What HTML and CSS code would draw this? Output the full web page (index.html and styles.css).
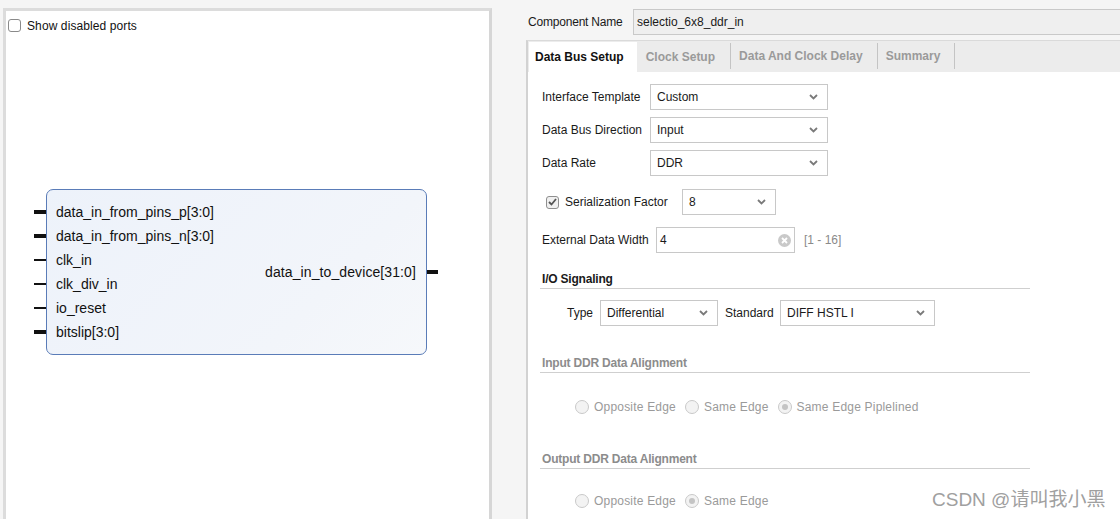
FILE: index.html
```html
<!DOCTYPE html>
<html>
<head>
<meta charset="utf-8">
<link rel="stylesheet" href="styles.css">
</head>
<body>
<div class="page">
  <section class="left-panel">
    <label class="show-ports"><span class="cb"></span>Show disabled ports</label>
    <div class="canvas">
      <div class="block">
        <div class="ports-in">
          <div class="port bus">data_in_from_pins_p[3:0]</div>
          <div class="port bus">data_in_from_pins_n[3:0]</div>
          <div class="port">clk_in</div>
          <div class="port">clk_div_in</div>
          <div class="port">io_reset</div>
          <div class="port bus">bitslip[3:0]</div>
        </div>
        <div class="ports-out">
          <div class="port-out bus">data_in_to_device[31:0]</div>
        </div>
      </div>
    </div>
  </section>

  <section class="right-panel">
    <div class="comp-row">
      <span class="comp-label">Component Name</span>
      <div class="comp-input">selectio_6x8_ddr_in</div>
    </div>
    <div class="tabs">
      <div class="tab-strip">
        <div class="tab active">Data Bus Setup</div>
        <div class="tab">Clock Setup</div>
        <div class="tab">Data And Clock Delay</div>
        <div class="tab">Summary</div>
      </div>
      <div class="tab-body">
        <div class="row r1">
          <span class="lbl w108">Interface Template</span>
          <div class="select s178"><span>Custom</span><svg class="chev" width="9" height="6" viewBox="0 0 9 6"><polyline points="1,1 4.5,4.5 8,1" fill="none" stroke="#7a7a7a" stroke-width="1.8"/></svg></div>
        </div>
        <div class="row r2">
          <span class="lbl w108">Data Bus Direction</span>
          <div class="select s178"><span>Input</span><svg class="chev" width="9" height="6" viewBox="0 0 9 6"><polyline points="1,1 4.5,4.5 8,1" fill="none" stroke="#7a7a7a" stroke-width="1.8"/></svg></div>
        </div>
        <div class="row r2">
          <span class="lbl w108">Data Rate</span>
          <div class="select s178"><span>DDR</span><svg class="chev" width="9" height="6" viewBox="0 0 9 6"><polyline points="1,1 4.5,4.5 8,1" fill="none" stroke="#7a7a7a" stroke-width="1.8"/></svg></div>
        </div>
        <div class="row r4">
          <span class="check"><svg width="9" height="8" viewBox="0 0 9 8"><polyline points="1,4 3.5,6.5 8,1" fill="none" stroke="#555" stroke-width="1.8"/></svg></span>
          <span class="lbl w117">Serialization Factor</span>
          <div class="select s94"><span>8</span><svg class="chev" width="9" height="6" viewBox="0 0 9 6"><polyline points="1,1 4.5,4.5 8,1" fill="none" stroke="#7a7a7a" stroke-width="1.8"/></svg></div>
        </div>
        <div class="row r5">
          <span class="lbl w114">External Data Width</span>
          <div class="textin"><span>4</span><svg class="clear" width="13" height="13" viewBox="0 0 13 13"><circle cx="6.5" cy="6.5" r="6.5" fill="#c9c9c9"/><path d="M4 4 L9 9 M9 4 L4 9" stroke="#fff" stroke-width="1.8"/></svg></div>
          <span class="range">[1 - 16]</span>
        </div>
        <div class="section h-io">I/O Signaling</div>
        <div class="row r-type">
          <span class="lbl type-lbl">Type</span>
          <div class="select s118"><span>Differential</span><svg class="chev" width="9" height="6" viewBox="0 0 9 6"><polyline points="1,1 4.5,4.5 8,1" fill="none" stroke="#7a7a7a" stroke-width="1.8"/></svg></div>
          <span class="lbl std-lbl">Standard</span>
          <div class="select s155"><span>DIFF HSTL I</span><svg class="chev" width="9" height="6" viewBox="0 0 9 6"><polyline points="1,1 4.5,4.5 8,1" fill="none" stroke="#7a7a7a" stroke-width="1.8"/></svg></div>
        </div>
        <div class="section disabled h-in">Input DDR Data Alignment</div>
        <div class="radios">
          <span class="radio"><span class="dot"></span>Opposite Edge</span>
          <span class="radio"><span class="dot"></span>Same Edge</span>
          <span class="radio"><span class="dot on"></span>Same Edge Piplelined</span>
        </div>
        <div class="section disabled h-out">Output DDR Data Alignment</div>
        <div class="radios out">
          <span class="radio"><span class="dot"></span>Opposite Edge</span>
          <span class="radio"><span class="dot on"></span>Same Edge</span>
        </div>
      </div>
    </div>
  </section>
</div>
<div class="watermark">CSDN @请叫我小黑</div>
</body>
</html>
```

FILE: styles.css
```css
* { box-sizing: border-box; }
html, body {
  margin: 0;
  padding: 0;
  width: 1120px;
  height: 519px;
  overflow: hidden;
  background: #f5f5f5;
  font-family: "Liberation Sans", Arial, "Noto Sans CJK SC", sans-serif;
  font-size: 12px;
  color: #1a1a1a;
}
.page {
  display: flex;
  align-items: flex-start;
  height: 519px;
}

/* LEFT */
.left-panel {
  margin: 8px 0 0 3px;
  width: 489px;
  height: 530px;
  background: #fff;
  border: 3px solid #dcdcdc;
  border-right-color: #d6d6d6;
  display: flex;
  flex-direction: column;
}
.show-ports {
  display: flex;
  align-items: center;
  gap: 6px;
  padding: 5px 0 0 2px;
  height: 24px;
  font-size: 12px;
  letter-spacing: 0.1px;
  color: #111;
}
.show-ports .cb {
  width: 13px;
  height: 13px;
  border: 1px solid #8a8a8a;
  border-radius: 3px;
  background: #fff;
}
.canvas {
  position: relative;
  flex: 1;
}
.block {
  position: absolute;
  left: 40px;
  top: 154px;
  width: 381px;
  height: 166px;
  border: 1px solid #5a7cb8;
  border-radius: 7px;
  background: linear-gradient(135deg, #edf2fa 0%, #f2f5fa 70%, #f6f8fb 100%);
  display: flex;
  justify-content: space-between;
  font-size: 14px;
  color: #111;
}
.ports-in {
  padding: 10px 0 0 9px;
}
.port {
  position: relative;
  height: 24px;
  line-height: 24px;
}
.port::before {
  content: "";
  position: absolute;
  left: -22px;
  top: 11px;
  width: 12px;
  height: 2px;
  background: #111;
}
.port.bus::before {
  top: 10px;
  height: 4px;
}
.ports-out {
  display: flex;
  align-items: center;
  padding-right: 10px;
}
.port-out {
  position: relative;
  line-height: 20px;
  letter-spacing: 0.1px;
}
.port-out::after {
  content: "";
  position: absolute;
  right: -22px;
  top: 8px;
  width: 11px;
  height: 4px;
  background: #111;
}

/* RIGHT */
.right-panel {
  margin-left: 34px;
  flex: 1;
  display: flex;
  flex-direction: column;
  min-width: 0;
}
.comp-row {
  display: flex;
  align-items: center;
  margin-top: 9px;
  height: 26px;
}
.comp-label {
  width: 107px;
  padding-left: 2px;
  letter-spacing: -0.2px;
}
.comp-input {
  flex: 1;
  height: 26px;
  margin-right: -20px;
  border: 1px solid #c9c9c9;
  background: #efefef;
  line-height: 24px;
  padding-left: 3px;
}
.tabs {
  margin-top: 5px;
  border-left: 2px solid #d2d2d2;
  border-top: 1px solid #dadada;
  background: #fff;
  height: 500px;
}
.tab-strip {
  display: flex;
  height: 31px;
  background: #ececec;
  padding-top: 1px;
  align-items: stretch;
}
.tab {
  font-weight: bold;
  color: #9a9a9a;
  padding: 0 14px 0 8px;
  display: flex;
  align-items: center;
  position: relative;
}
.tab + .tab + .tab,
.tab + .tab + .tab + .tab {
  border-left: 1px solid #c4c4c4;
}
.tab:last-child { border-right: 1px solid #c4c4c4; }
.tab + .tab + .tab { margin-top: 1px; margin-bottom: 3px; }
.tab.active {
  background: #fff;
  color: #111;
  padding: 0 13px 0 6px;
  margin-left: 1px;
}
.tab:nth-child(2) { padding-left: 9px; padding-right: 15px; }
.tab-body {
  padding-left: 14px;
  display: flex;
  flex-direction: column;
}
.row {
  display: flex;
  align-items: center;
  height: 26px;
}
.r1 { margin-top: 12px; }
.r2 { margin-top: 7px; }
.r4 { margin-top: 13px; }
.r5 { margin-top: 12px; }
.lbl { white-space: nowrap; }
.w108 { width: 108px; }
.w117 { width: 117px; }
.w114 { width: 114px; }
.select {
  height: 26px;
  border: 1px solid #c8c8c8;
  background: #fff;
  display: flex;
  align-items: center;
  justify-content: space-between;
  padding: 0 9px 0 6px;
}
.s178 { width: 178px; }
.s94 { width: 94px; }
.s118 { width: 118px; }
.s155 { width: 155px; }
.check {
  width: 13px;
  height: 13px;
  margin: 0 6px 0 4px;
  border: 1px solid #8f8f8f;
  border-radius: 3px;
  background: #f0f0f0;
  display: flex;
  align-items: center;
  justify-content: center;
}
.textin {
  width: 139px;
  height: 26px;
  border: 1px solid #c8c8c8;
  background: #fff;
  display: flex;
  align-items: center;
  justify-content: space-between;
  padding: 0 3px 0 3px;
}
.range {
  margin-left: 9px;
  color: #8a8a8a;
}
.section {
  font-weight: bold;
  height: 19px;
  line-height: 18px;
  margin-left: -2px;
  width: 490px;
  padding-left: 2px;
  border-bottom: 1px solid #cfcfcf;
  letter-spacing: -0.2px;
}
.section.disabled { color: #8c8c8c; }
.h-io { margin-top: 17px; }
.r-type { margin-top: 11px; }
.type-lbl { margin-left: 25px; width: 33px; }
.std-lbl { margin-left: 7px; width: 55px; }
.h-in { margin-top: 28px; }
.h-out { margin-top: 33px; }
.radios {
  display: flex;
  align-items: center;
  height: 20px;
  margin-top: 24px;
  padding-left: 33px;
  color: #9a9a9a;
  letter-spacing: 0.2px;
}
.radios.out { margin-top: 22px; }
.radio {
  display: flex;
  align-items: center;
  margin-right: 9px;
}
.dot {
  width: 14px;
  height: 14px;
  border-radius: 50%;
  border: 1px solid #c9c9c9;
  background: #f3f3f3;
  margin-right: 5px;
  display: flex;
  align-items: center;
  justify-content: center;
}
.dot.on::after {
  content: "";
  width: 6px;
  height: 6px;
  border-radius: 50%;
  background: #c4c4c4;
}
.watermark {
  position: absolute;
  left: 932px;
  top: 488px;
  font-size: 19px;
  line-height: 24px;
  color: #a0a0a0;
}
```
